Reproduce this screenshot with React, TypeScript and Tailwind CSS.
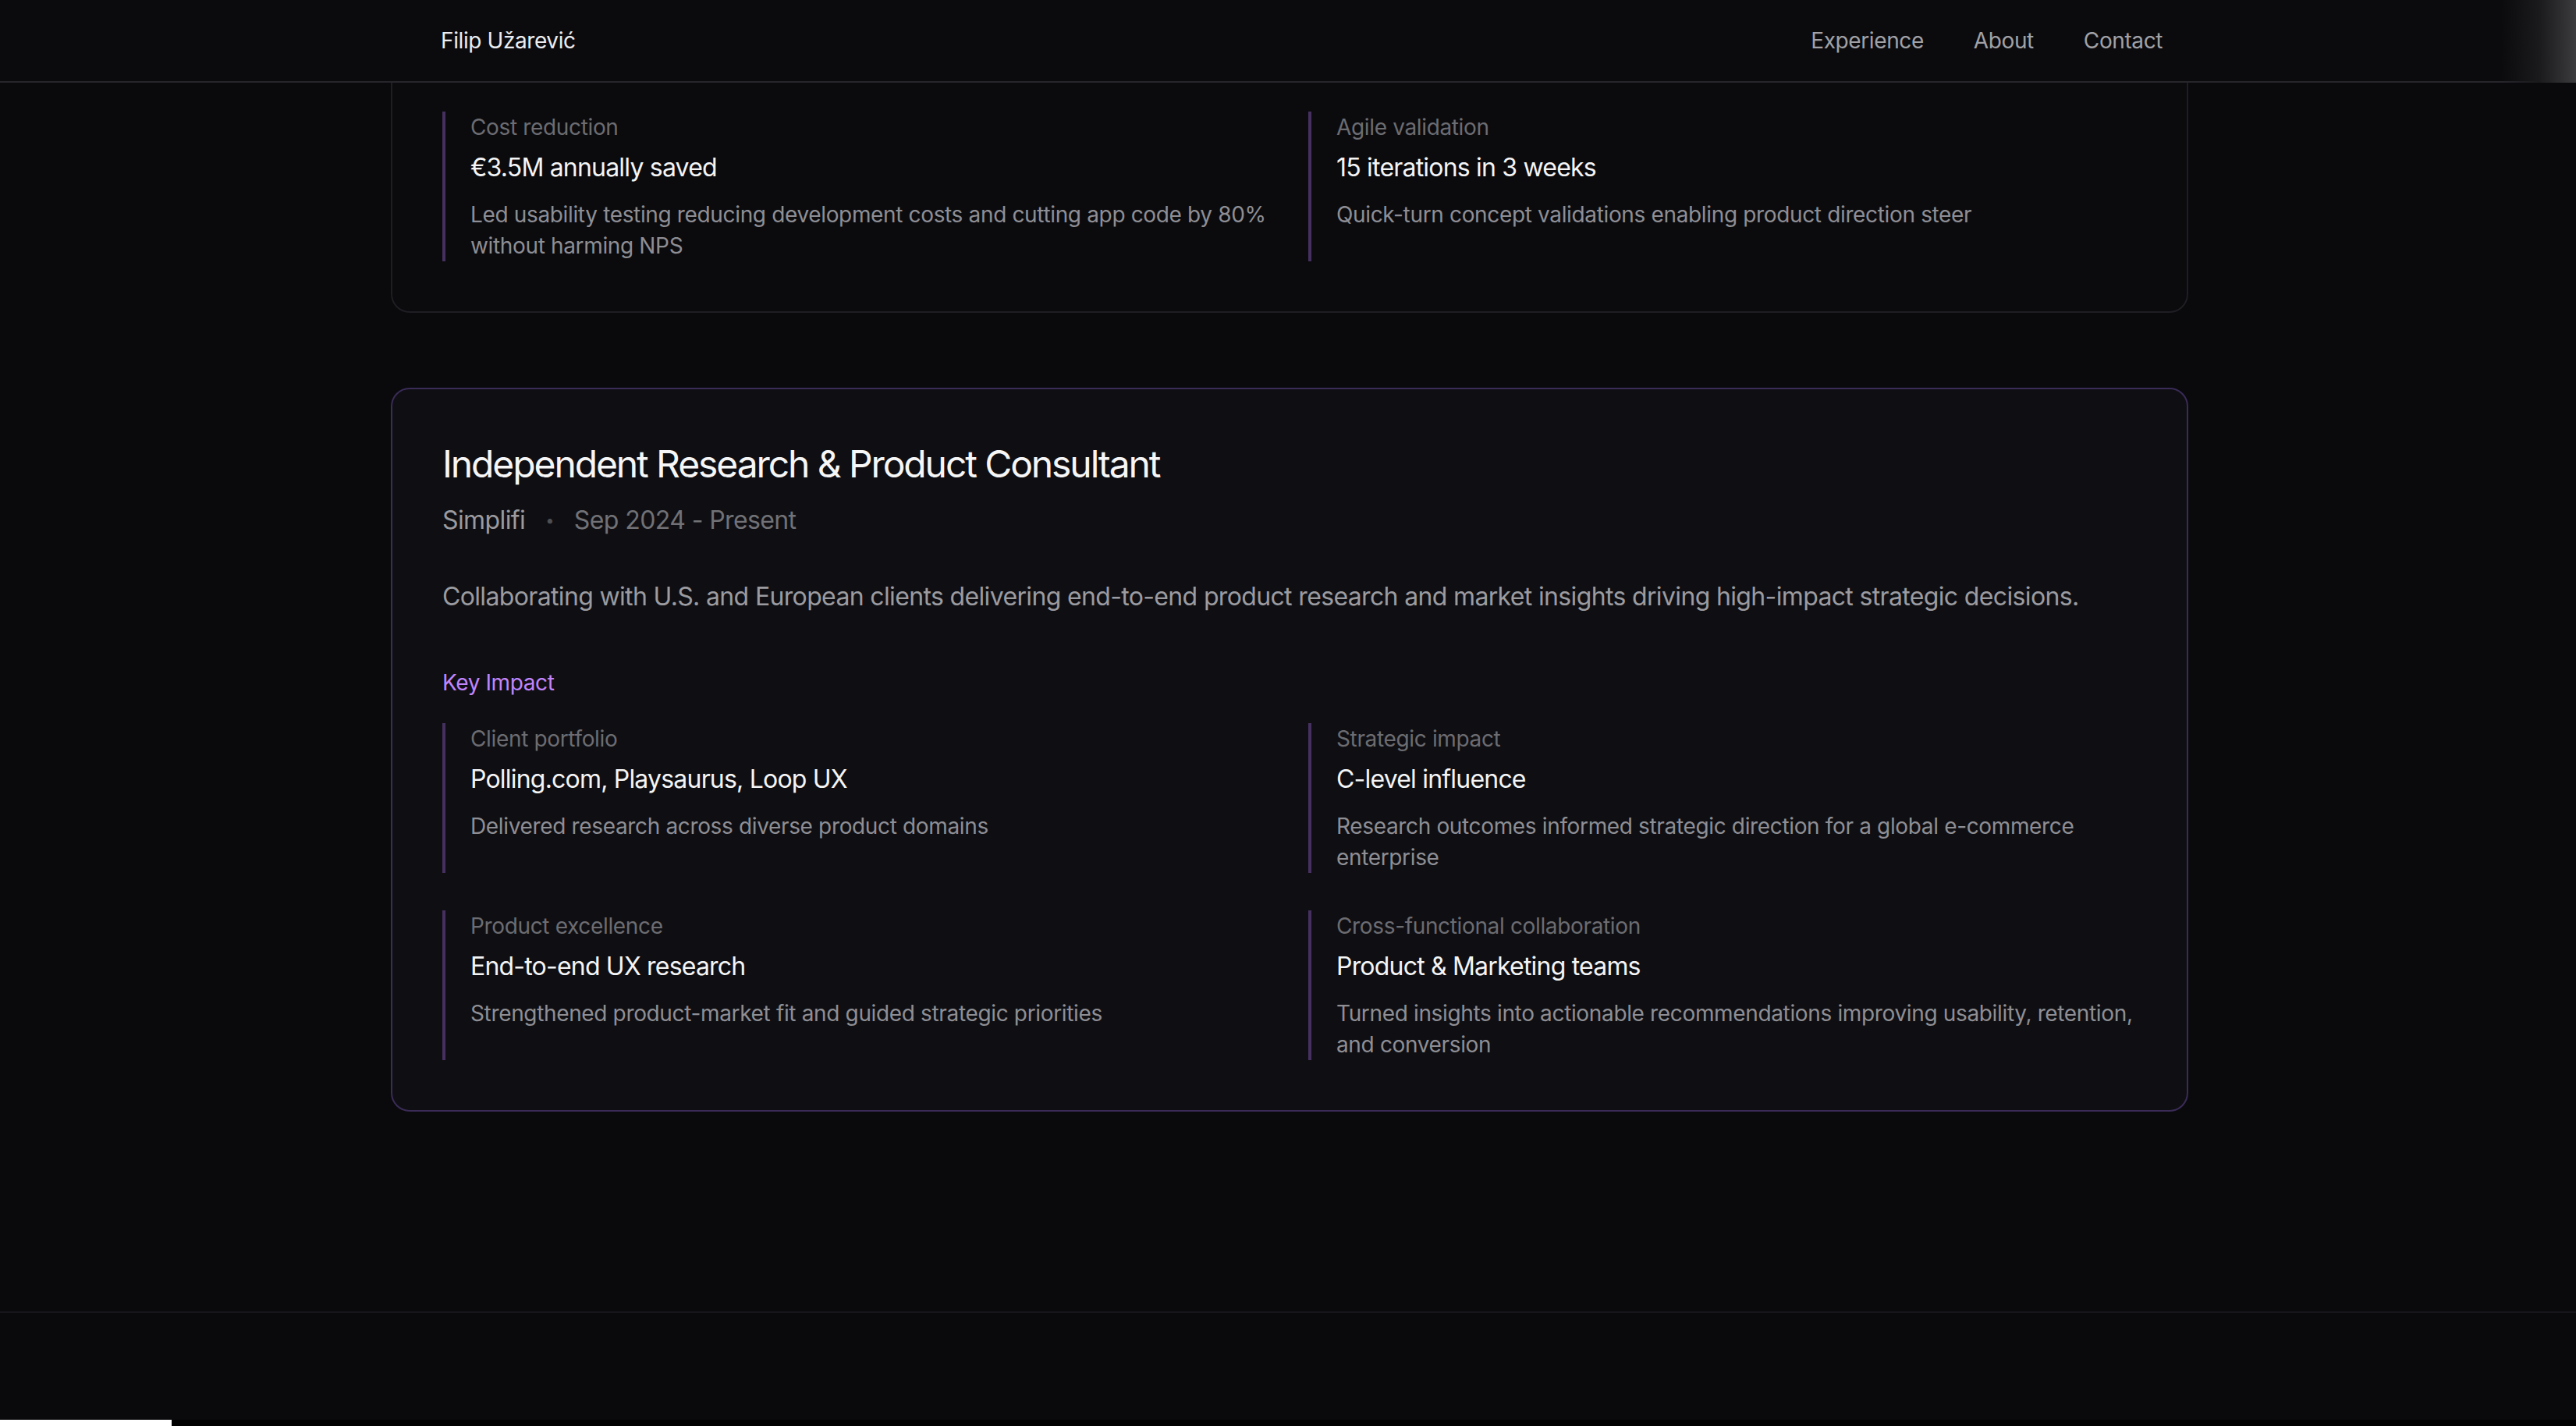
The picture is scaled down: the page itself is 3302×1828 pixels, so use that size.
import React from "react";

type Item = { label: string; value: string; desc: string };

const card1Items: Item[] = [
  {
    label: "Cost reduction",
    value: "€3.5M annually saved",
    desc: "Led usability testing reducing development costs and cutting app code by 80% without harming NPS",
  },
  {
    label: "Agile validation",
    value: "15 iterations in 3 weeks",
    desc: "Quick-turn concept validations enabling product direction steer",
  },
];

const card2Items: Item[] = [
  {
    label: "Client portfolio",
    value: "Polling.com, Playsaurus, Loop UX",
    desc: "Delivered research across diverse product domains",
  },
  {
    label: "Strategic impact",
    value: "C-level influence",
    desc: "Research outcomes informed strategic direction for a global e-commerce enterprise",
  },
  {
    label: "Product excellence",
    value: "End-to-end UX research",
    desc: "Strengthened product-market fit and guided strategic priorities",
  },
  {
    label: "Cross-functional collaboration",
    value: "Product & Marketing teams",
    desc: "Turned insights into actionable recommendations improving usability, retention, and conversion",
  },
];

function ImpactItem({ item }: { item: Item }) {
  return (
    <div className="border-l-4 border-[#45305f] pl-[32px]">
      <div className="text-[28px] leading-[40px] tracking-[-0.35px] text-[#6c6c71]">{item.label}</div>
      <div className="mt-[8px] text-[32px] leading-[48px] tracking-[-0.8px] text-[#f4f4f5]">{item.value}</div>
      <div className="mt-[16px] text-[28px] leading-[40px] tracking-[-0.35px] text-[#8e8e94]">{item.desc}</div>
    </div>
  );
}

export default function App() {
  return (
    <div
      className="relative flex h-[1828px] flex-col overflow-hidden bg-[#0a0a0d]"
      style={{ fontFamily: "Inter, 'Noto Sans', sans-serif" }}
    >
      {/* Header */}
      <header className="absolute inset-x-0 top-0 z-10 h-[106px] border-b-2 border-[#26262b] bg-[#0b0b0e]">
        <div className="mx-auto flex h-[104px] w-[2308px] items-center justify-between pl-[68px] pr-[33px]">
          <div className="text-[28px] leading-[40px] tracking-[-0.4px] text-[#ececee]">Filip Užarević</div>
          <nav className="flex items-center gap-[64px] text-[28px] leading-[40px] tracking-[-0.4px] text-[#a1a1a6]">
            <span>Experience</span>
            <span>About</span>
            <span>Contact</span>
          </nav>
        </div>
        <div className="pointer-events-none absolute right-0 top-0 h-[106px] w-[96px] bg-gradient-to-r from-transparent via-[#1a1a1d] to-[#3c3c3e]" />
      </header>

      {/* Main */}
      <main className="mx-auto flex w-[2308px] flex-col gap-[96px] pl-[4px]">
        {/* Card 1 (scrolled, top hidden under header) */}
        <section className="rounded-b-[24px] border-2 border-[#1e1e23] bg-[#0b0b0e] px-[64px] pb-[64px] pt-[141px]">
          <div className="grid grid-cols-2 gap-[48px]">
            {card1Items.map((it) => (
              <ImpactItem key={it.label} item={it} />
            ))}
          </div>
        </section>

        {/* Card 2 */}
        <section className="rounded-[24px] border-2 border-[#3a2b57] bg-[#0f0f13] p-[64px]">
          <h2 className="text-[48px] leading-[64px] font-normal tracking-[-2.1px] text-[#f6f6f7]">
            Independent Research &amp; Product Consultant
          </h2>
          <div className="mt-[16px] flex items-center text-[32px] leading-[48px] tracking-[-0.6px]">
            <span className="text-[#9a9a9f]">Simplifi</span>
            <span className="mx-[26px] text-[20px] text-[#4e4e53]">•</span>
            <span className="text-[#717176]">Sep 2024 - Present</span>
          </div>
          <p className="mt-[48px] text-[32px] leading-[52px] tracking-[-0.65px] text-[#9b9ba0]">
            Collaborating with U.S. and European clients delivering end-to-end product research and market
            insights driving high-impact strategic decisions.
          </p>
          <div className="mt-[64px] text-[28px] leading-[40px] tracking-[-0.4px] text-[#c084fc]">Key Impact</div>
          <div className="mt-[32px] grid grid-cols-2 gap-[48px]">
            {card2Items.map((it) => (
              <ImpactItem key={it.label} item={it} />
            ))}
          </div>
        </section>
      </main>

      {/* Footer */}
      <footer className="mt-[256px] flex-1 border-t-2 border-[#17171b]" />

      {/* Bottom strip */}
      <div className="flex h-[8px] bg-black">
        <div className="w-[220px] bg-white" />
      </div>
    </div>
  );
}
